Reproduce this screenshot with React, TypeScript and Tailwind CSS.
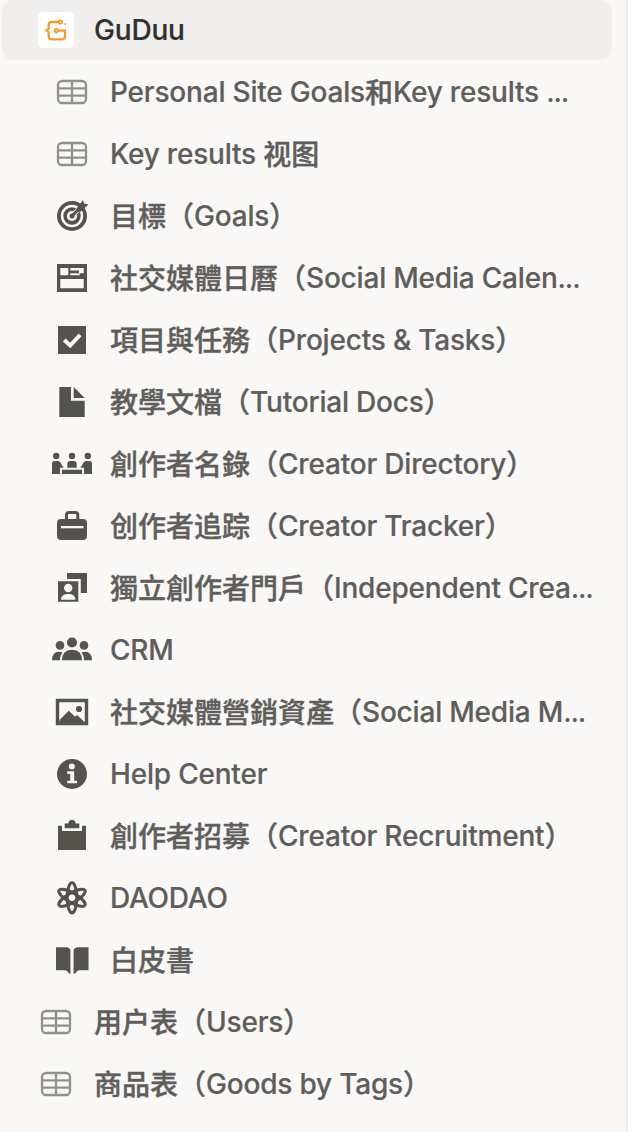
import React from 'react';

const ink = '#55534e';
const paper = '#f9f8f7';

function Icon({ children }: { children: React.ReactNode }) {
    return (
        <svg className="h-10 w-10 shrink-0" viewBox="0 0 40 40" fill={ink}>
            {children}
        </svg>
    );
}

const TableIcon = () => (
    <Icon>
        <g fill="none" stroke="#91908c" strokeWidth="2.3">
            <rect x="6" y="9" width="28" height="22" rx="4" />
            <path d="M20 9v22M6 16.3h28M6 23.7h28" />
        </g>
    </Icon>
);

const TargetIcon = () => (
    <Icon>
        <circle cx="20" cy="20" r="13.1" fill="none" stroke={ink} strokeWidth="3.8" />
        <circle cx="20" cy="20" r="6.9" fill="none" stroke={ink} strokeWidth="3.6" />
        <path d="M20 20L28 12" stroke={paper} strokeWidth="4.6" />
        <circle cx="20" cy="20" r="2.5" />
        <path d="M20 20L30 10" stroke={ink} strokeWidth="3" />
        <path d="M24.5 12.5l6.5-8.5 1 3.6 4.5.9-8 7.2-4 .2z" />
    </Icon>
);

const BoardIcon = () => (
    <Icon>
        <path d="M5 6h30v28H5z" />
        <path fill={paper} d="M8.3 10h8v7.3h-8zM18.3 10h13.4v2.5H18.3zM18.3 15.3h9.4v2h-9.4zM27 12h4.7v3.3H27zM8.3 21h23.4v9.2H8.3z" />
    </Icon>
);

const CheckIcon = () => (
    <Icon>
        <path d="M6 6h28v28H6z" />
        <path d="M12.3 20.1l5.9 5.4 9.9-10.7" fill="none" stroke={paper} strokeWidth="4" />
    </Icon>
);

const DocIcon = () => (
    <Icon>
        <path d="M7.3 5H19v13.7h13.7V35H7.3zM21.7 5l11 11h-11z" />
    </Icon>
);

const MeetingIcon = () => (
    <Icon>
        <circle cx="4.2" cy="12" r="3.2" />
        <circle cx="20" cy="12" r="3.2" />
        <circle cx="35.8" cy="12" r="3.2" />
        <path d="M0 30V19.5q0-2.500 2.500-2.500h3.500q1.500 0 2.300 1.200l3.200 5.500H8V30z" />
        <path d="M40 30V19.5q0-2.500-2.500-2.500h-3.500q-1.500 0-2.300 1.200l-3.200 5.500H32V30z" />
        <path d="M15.3 23.7V20q0-3 3-3h3.400q3 0 3 3v3.700zM10 25.700h20V30H10z" />
    </Icon>
);

const BriefcaseIcon = () => (
    <Icon>
        <path d="M14.5 14V9q0-2.500 2.500-2.500h6.300q2.500 0 2.500 2.500v5" fill="none" stroke={ink} strokeWidth="3" />
        <rect x="5" y="13" width="30" height="21" rx="4" />
        <path d="M9 20h22.500v2.300H9z" fill={paper} />
    </Icon>
);

const PortraitIcon = () => (
    <Icon>
        <path d="M15 5h20v20h-6.200V11H15zM6 13.300h20.300v20.400H6z" />
        <circle cx="16.2" cy="20" r="4.2" fill={paper} />
        <path d="M9 31.700q0-5.700 7.200-5.700t7.200 5.700z" fill={paper} />
    </Icon>
);

const PeopleIcon = () => (
    <Icon>
        <circle cx="20" cy="12.5" r="5.1" />
        <circle cx="8" cy="15.4" r="4.3" />
        <circle cx="32" cy="15.4" r="4.3" />
        <path d="M10 30.300q0-10.500 10-10.500t10 10.500z" />
        <path d="M0 30.300Q0 22 7 21.800q2 0 3.500.7Q8 25.500 7.800 30.300zM40 30.300q0-8.300-7-8.500-2 0-3.500.7 2.500 3 2.700 7.800z" />
    </Icon>
);

const ImageIcon = () => (
    <Icon>
        <path d="M5.500 8.500h29v23h-29z" fill="none" stroke={ink} strokeWidth="3.4" />
        <circle cx="27" cy="17" r="3.1" />
        <path d="M7.500 28l9.300-9.200L23 24.700l2-1.700 6.500 6v2.500h-24z" />
    </Icon>
);

const InfoIcon = () => (
    <Icon>
        <circle cx="20" cy="20" r="15" />
        <circle cx="19.8" cy="12.4" r="3" fill={paper} />
        <path d="M15.3 17.300h6.900v9.400h2.800v2.600h-9.700v-2.600h2.900v-6.800h-2.900z" fill={paper} />
    </Icon>
);

const ClipboardIcon = () => (
    <Icon>
        <path d="M6 9.700h4V15h20V9.700h4V34H6z" />
        <path d="M12.700 7.500h3.500q.8-3.700 3.800-3.700t3.800 3.700h3.500v4.800H12.700z" />
    </Icon>
);

const AtomIcon = () => (
    <Icon>
        <g fill="none" stroke={ink} strokeWidth="3.1">
            <ellipse cx="20" cy="19.8" rx="4.8" ry="15" />
            <ellipse cx="20" cy="19.8" rx="4.8" ry="15" transform="rotate(60 20 19.8)" />
            <ellipse cx="20" cy="19.8" rx="4.8" ry="15" transform="rotate(-60 20 19.8)" />
        </g>
    </Icon>
);

const BookIcon = () => (
    <Icon>
        <path d="M4 7.300h11q3.400.4 3.400 3.900v22.500q-1.700 0-2.400-1.500-.9-1.900-3-1.900H4zM36.500 7.300h-11q-3.900.4-3.900 3.900v22.500q2 0 2.700-1.500.9-1.900 3-1.900h9.200z" />
    </Icon>
);

const GuDuuLogo = () => (
    <div className="flex h-10 w-10 shrink-0 items-center justify-center">
        <svg className="h-9 w-9 rounded-[5px] bg-white" viewBox="0 0 36 36" fill="none" stroke="#f29a2e" strokeWidth="2.3">
            <path d="M20.500 10H13.500Q10.700 10 10.700 12.800V16.500L9 18.300l1.700 1.800v4.500q0 2.700 2.800 2.700h10.700q2.800 0 2.800-2.700v-6h-7M7.200 18.300H9" />
            <circle cx="22.4" cy="10" r="1.6" strokeWidth="1.9" />
            <circle cx="18.2" cy="18.6" r="1.7" strokeWidth="1.9" />
            <circle cx="27.2" cy="11.9" r="1" fill="#f29a2e" stroke="none" />
        </svg>
    </div>
);

// Chinese runs are drawn slightly heavier than the regular CJK face, Latin runs a little tighter.
function Title({ text }: { text: string }) {
    const parts = text.split(/([\u3400-\u9fff\uff08\uff09]+|\.\.\.)/).filter(Boolean);
    return (
        <span className="whitespace-pre">
            {parts.map((part, i) => {
                if (part === '...') {
                    return <span key={i} className="tracking-[-1.2px]">{part}</span>;
                }
                if (/[\u3400-\u9fff\uff08\uff09]/.test(part)) {
                    return (
                        <span key={i} className="align-[-1px] leading-none [-webkit-text-stroke:0.4px_currentColor]">
                            {part}
                        </span>
                    );
                }
                return <span key={i} className="tracking-[-0.2px] [-webkit-text-stroke:0.2px_currentColor]">{part}</span>;
            })}
        </span>
    );
}

const pages = [
    { icon: TableIcon, title: 'Personal Site Goals和Key results ...' },
    { icon: TableIcon, title: 'Key results 视图' },
    { icon: TargetIcon, title: '目標（Goals）' },
    { icon: BoardIcon, title: '社交媒體日曆（Social Media Calen...' },
    { icon: CheckIcon, title: '項目與任務（Projects & Tasks）' },
    { icon: DocIcon, title: '教學文檔（Tutorial Docs）' },
    { icon: MeetingIcon, title: '創作者名錄（Creator Directory）' },
    { icon: BriefcaseIcon, title: '创作者追踪（Creator Tracker）' },
    { icon: PortraitIcon, title: '獨立創作者門戶（Independent Crea...' },
    { icon: PeopleIcon, title: 'CRM' },
    { icon: ImageIcon, title: '社交媒體營銷資產（Social Media M...' },
    { icon: InfoIcon, title: 'Help Center' },
    { icon: ClipboardIcon, title: '創作者招募（Creator Recruitment）' },
    { icon: AtomIcon, title: 'DAODAO' },
    { icon: BookIcon, title: '白皮書' },
];

const databases = [
    { icon: TableIcon, title: '用户表（Users）' },
    { icon: TableIcon, title: '商品表（Goods by Tags）' },
];

export default function App() {
    return (
        <div className="h-[1132px] w-[640px] overflow-hidden bg-white">
            <nav className="flex h-full w-[628px] flex-col gap-0.5 border-r-2 border-[#eeedec] bg-[#f9f8f7] font-['Inter','Noto_Sans_CJK_SC',sans-serif] text-[28px] leading-[60px] font-medium text-[#5f5e5b]">
                <div className="ml-0.5 flex h-[60px] w-[610px] shrink-0 items-center gap-[18px] rounded-xl bg-[#f0efed] pl-[34px] text-[#32302c]">
                    <GuDuuLogo />
                    <Title text="GuDuu" />
                </div>
                {pages.map(({ icon: RowIcon, title }) => (
                    <div key={title} className="flex h-[60px] shrink-0 items-center gap-[18px] pl-[52px]">
                        <RowIcon />
                        <Title text={title} />
                    </div>
                ))}
                {databases.map(({ icon: RowIcon, title }) => (
                    <div key={title} className="flex h-[60px] shrink-0 items-center gap-[18px] pl-9">
                        <RowIcon />
                        <Title text={title} />
                    </div>
                ))}
            </nav>
        </div>
    );
}
